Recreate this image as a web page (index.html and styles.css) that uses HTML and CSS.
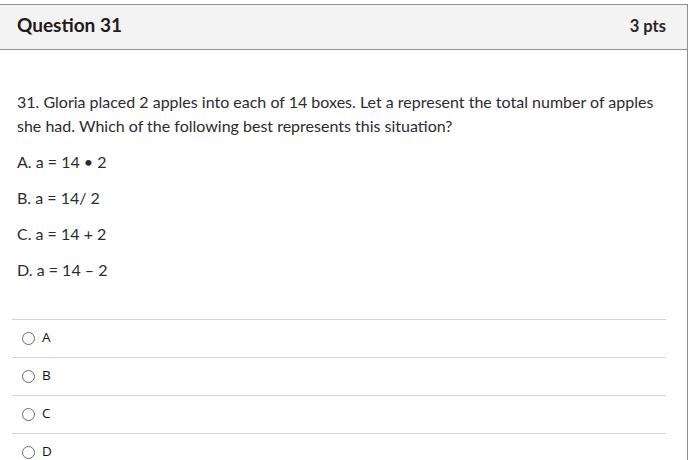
FILE: index.html
```html
<!DOCTYPE html>
<html>
<head>
<meta charset="utf-8">
<link rel="stylesheet" href="styles.css">
</head>
<body>
<div class="card">
  <div class="header">
    <div class="title">Question 31</div>
    <div class="pts">3 pts</div>
  </div>
  <div class="content">
    <div class="question">
      <p class="stem">31. Gloria placed 2 apples into each of 14 boxes. Let a represent the total number of apples she had. Which of the following best represents this situation?</p>
      <p>A. a = 14 &#8226; 2</p>
      <p>B. a = 14/ 2</p>
      <p>C. a = 14 + 2</p>
      <p>D. a = 14 &#8211; 2</p>
    </div>
    <div class="answers">
      <div class="answer"><span class="radio"></span><span class="label">A</span></div>
      <div class="answer"><span class="radio"></span><span class="label">B</span></div>
      <div class="answer"><span class="radio"></span><span class="label">C</span></div>
      <div class="answer"><span class="radio"></span><span class="label">D</span></div>
    </div>
  </div>
</div>
</body>
</html>
```

FILE: styles.css
```css
html, body {
  margin: 0;
  padding: 0;
  background: #fff;
}
body {
  font-family: Lato, "Noto Sans", sans-serif;
  color: #2d2b2e;
}
.card {
  margin: 4px 0 0 -1px;
  width: 689px;
  box-sizing: border-box;
  border: 1px solid #8f8f8f;
  border-bottom: none;
  height: 470px;
}
.header {
  height: 44px;
  background: #f3f3f3;
  border-bottom: 1px solid #8f8f8f;
  display: flex;
  align-items: center;
  justify-content: space-between;
  padding: 0 21px 0 17px;
}
.title {
  font-size: 19px;
  font-weight: 700;
  color: #221a1a;
  margin-top: -5px;
}
.pts {
  font-size: 16.5px;
  font-weight: 700;
  color: #2b2426;
  margin-top: -2px;
}
.content {
  padding: 40px 21px 0 12px;
}
.question {
  padding-left: 5px;
  font-size: 16px;
  line-height: 24px;
}
.question p {
  margin: 0 0 12px 0;
}
.answers {
  margin-top: 37px;
}
.answer {
  height: 37px;
  border-top: 1px solid #d3d3d3;
  display: flex;
  align-items: center;
}
.radio {
  width: 11px;
  height: 11px;
  border: 1px solid #6b6b6b;
  border-radius: 50%;
  margin-left: 10px;
  margin-right: 7px;
}
.label {
  font-family: "Open Sans", "Noto Sans", sans-serif;
  font-size: 13.5px;
  color: #111;
  margin-top: -3px;
}
```
